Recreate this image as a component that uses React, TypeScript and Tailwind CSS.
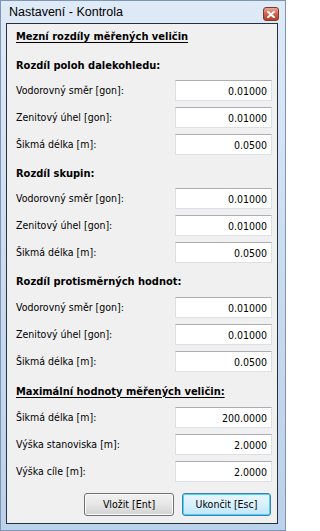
import React from 'react';

interface Field {
  label: string;
  value: string;
}

interface Section {
  title: string;
  fields: Field[];
  underline?: boolean;
  h: string;
}

const smer: Field[] = [
  { label: 'Vodorovný směr [gon]:', value: '0.01000' },
  { label: 'Zenitový úhel [gon]:', value: '0.01000' },
  { label: 'Šikmá délka [m]:', value: '0.0500' },
];

const sections: Section[] = [
  { title: 'Rozdíl poloh dalekohledu:', fields: smer, h: 'h-[26px]' },
  { title: 'Rozdíl skupin:', fields: smer, h: 'h-[27px]' },
  { title: 'Rozdíl protisměrných hodnot:', fields: smer, h: 'h-[28px]' },
  {
    title: 'Maximální hodnoty měřených veličin:',
    underline: true,
    h: 'h-[29px]',
    fields: [
      { label: 'Šikmá délka [m]:', value: '200.0000' },
      { label: 'Výška stanoviska [m]:', value: '2.0000' },
      { label: 'Výška cíle [m]:', value: '2.0000' },
    ],
  },
];

const font = "font-['DejaVu_Sans_Condensed','Liberation_Sans',sans-serif]";

const Row: React.FC<{ field: Field }> = ({ field }) => (
  <div className="flex h-[27px] items-center justify-between pl-[9px] pr-[5px]">
    <span className="text-[10.5px] text-black">{field.label}</span>
    <input
      readOnly
      value={field.value}
      className={`h-[21px] w-[97px] border border-[#dbdfe6] border-t-[#abadb3] bg-white pr-[4px] text-right text-[10.5px] text-black outline-none ${font}`}
    />
  </div>
);

export default function App() {
  return (
    <div className={`flex h-[531px] w-[286px] flex-col border border-[#7d95b2] bg-gradient-to-b from-[#dfeaf7] via-[#cbdcf0] to-[#bcd1ea] ${font}`}>
      {/* titulek okna */}
      <div className="flex h-[22px] shrink-0 items-start justify-between pl-[8px] pr-[6px]">
        <span className="pt-[4px] font-['Liberation_Sans',sans-serif] text-[12.5px] leading-[14px] text-black">
          Nastavení - Kontrola
        </span>
        <div className="mt-[6px] flex h-[14px] w-[16px] items-center justify-center rounded-[3px] border border-[#7a3a2e] bg-gradient-to-b from-[#e9a99b] via-[#d2604c] to-[#b8402c]">
          <svg width="8" height="7" viewBox="0 0 8 7">
            <path d="M1 0.8 L7 6.2 M7 0.8 L1 6.2" stroke="white" strokeWidth="2" strokeLinecap="square" />
          </svg>
        </div>
      </div>

      {/* obsah */}
      <div className="mb-[6px] ml-[5px] mr-[7px] flex flex-1 flex-col border border-[#24313f] bg-[#f0f0f0]">
        <div className="flex h-[27px] items-center pl-[9px]">
          <span className="text-[11px] font-bold text-black underline underline-offset-[2px]">
            Mezní rozdíly měřených veličin
          </span>
        </div>
        {sections.map((s, i) => (
          <div key={i} className="flex flex-col">
            <div className={`flex ${s.h} items-center pl-[9px] pt-[5px]`}>
              <span
                className={`text-[11px] font-bold text-black ${s.underline ? 'underline underline-offset-[2px]' : ''}`}
              >
                {s.title}
              </span>
            </div>
            {s.fields.map((f, j) => (
              <Row key={j} field={f} />
            ))}
          </div>
        ))}

        {/* tlačítka */}
        <div className="mt-[8px] flex justify-end gap-[8px] pr-[6px]">
          <button className="h-[23px] w-[90px] rounded-[3px] border border-[#707070] bg-gradient-to-b from-[#f2f2f2] via-[#e6e6e6] to-[#d2d2d2] text-[10.5px] text-black shadow-[inset_0_0_0_1px_#fcfcfc]">
            Vložit [Ent]
          </button>
          <button className="h-[23px] w-[89px] rounded-[3px] border border-[#3c7fb1] bg-gradient-to-b from-[#eaf6fd] via-[#d9f0fc] to-[#bee6fd] text-[10.5px] text-black shadow-[inset_0_0_0_1px_#48d4fa]">
            Ukončit [Esc]
          </button>
        </div>
      </div>
    </div>
  );
}
